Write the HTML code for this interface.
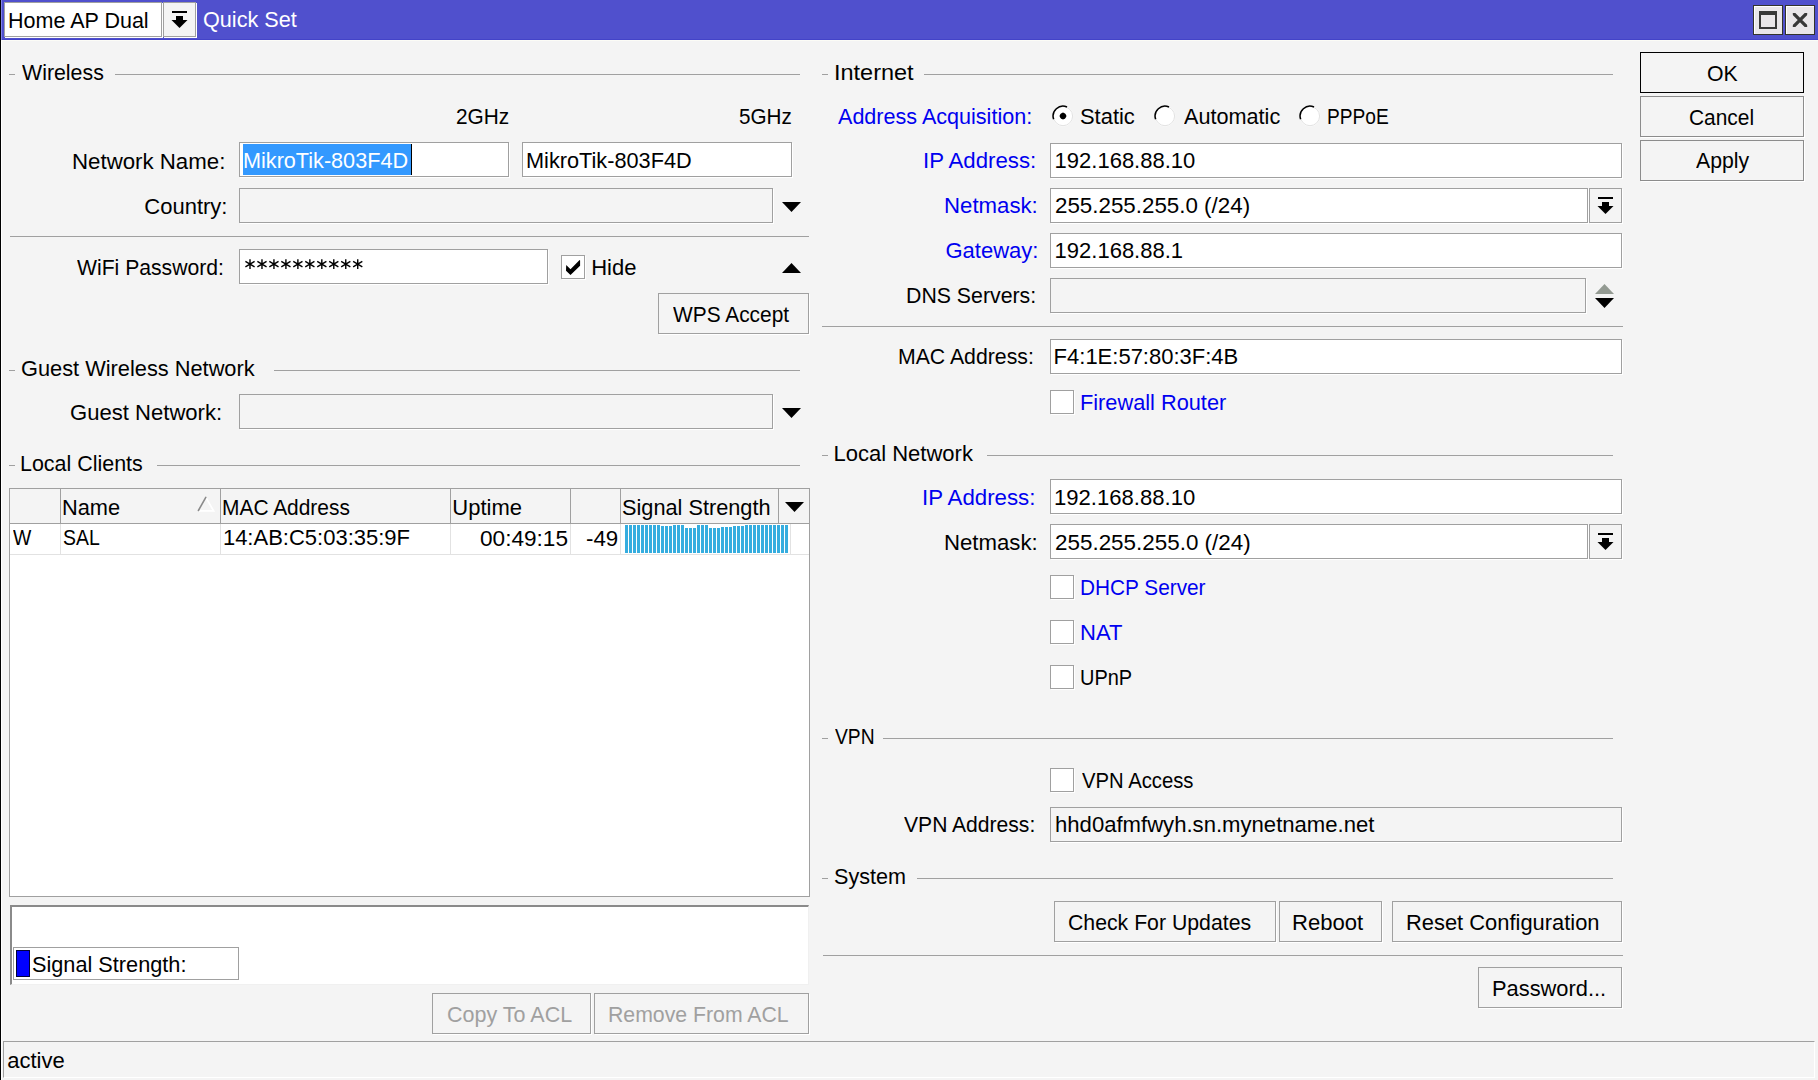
<!DOCTYPE html>
<html><head><meta charset="utf-8"><title>Quick Set</title>
<style>
html,body{margin:0;padding:0}
body{width:1818px;height:1080px;overflow:hidden;position:relative;background:#f4f4f4;font-family:"Liberation Sans",sans-serif}
body>div{position:absolute;box-sizing:border-box}
.t{font-size:22px;line-height:22px;white-space:pre;transform-origin:0 18px}
svg{display:block}
</style></head><body>
<div style="left:0px;top:0px;width:1818px;height:40px;background:#5050cd"></div>
<div style="left:0px;top:39px;width:1818px;height:1px;background:#4343c8"></div>
<div style="left:0px;top:40px;width:1818px;height:1px;background:#fcfcf6"></div>
<div style="left:0px;top:0px;width:1px;height:1080px;background:#000"></div>
<div style="left:1px;top:0px;width:1px;height:40px;background:#8282e6"></div>
<div style="left:1px;top:41px;width:1px;height:1039px;background:#fff"></div>
<div style="left:4px;top:2px;width:158px;height:35px;background:#fff;border:1px solid #a0a0a0;box-shadow:1px 1px 0 #fff;"></div>
<div style="left:163px;top:2px;width:33px;height:35px;background:#f4f4f4;border:1px solid #a0a0a0;box-shadow:1px 1px 0 #fff;"></div>
<svg style="position:absolute;left:163px;top:2px" width="33" height="35" viewBox="0 0 33 35"><rect x="9" y="9" width="15" height="2" fill="#000"/><rect x="13" y="14" width="7" height="5" fill="#000"/><path d="M8.5 18 L24.5 18 L16.5 26 Z" fill="#000"/></svg>
<div style="left:1753px;top:5px;width:30px;height:30px;background:#e9e6e9;border:1px solid #33332b;box-shadow:inset 1px 1px 0 #fff"></div>
<div style="left:1785px;top:5px;width:30px;height:30px;background:#e9e6e9;border:1px solid #33332b;box-shadow:inset 1px 1px 0 #fff"></div>
<svg style="position:absolute;left:1753px;top:5px" width="30" height="30" viewBox="0 0 30 30"><rect x="7" y="7" width="16" height="16" fill="none" stroke="#383838" stroke-width="2"/><rect x="6" y="6" width="18" height="4" fill="#383838"/></svg>
<svg style="position:absolute;left:1785px;top:5px" width="30" height="30" viewBox="0 0 30 30"><defs><clipPath id="cx"><rect x="7.8" y="7.9" width="14.4" height="14.1"/></clipPath></defs><path d="M5 5 L25 25 M25 5 L5 25" stroke="#383838" stroke-width="3.3" clip-path="url(#cx)"/></svg>
<div style="left:9px;top:74px;width:6px;height:1px;background:#a0a0a0"></div>
<div style="left:115px;top:74px;width:685px;height:1px;background:#a0a0a0"></div>
<div style="left:9px;top:370px;width:6px;height:1px;background:#a0a0a0"></div>
<div style="left:274px;top:370px;width:526px;height:1px;background:#a0a0a0"></div>
<div style="left:9px;top:465px;width:6px;height:1px;background:#a0a0a0"></div>
<div style="left:157px;top:465px;width:643px;height:1px;background:#a0a0a0"></div>
<div style="left:822px;top:74px;width:6px;height:1px;background:#a0a0a0"></div>
<div style="left:924px;top:74px;width:689px;height:1px;background:#a0a0a0"></div>
<div style="left:822px;top:455px;width:6px;height:1px;background:#a0a0a0"></div>
<div style="left:987px;top:455px;width:626px;height:1px;background:#a0a0a0"></div>
<div style="left:822px;top:738px;width:6px;height:1px;background:#a0a0a0"></div>
<div style="left:883px;top:738px;width:730px;height:1px;background:#a0a0a0"></div>
<div style="left:822px;top:878px;width:6px;height:1px;background:#a0a0a0"></div>
<div style="left:917px;top:878px;width:696px;height:1px;background:#a0a0a0"></div>
<div style="left:10px;top:236px;width:799px;height:1px;background:#a0a0a0"></div>
<div style="left:822px;top:326px;width:801px;height:1px;background:#a0a0a0"></div>
<div style="left:823px;top:955px;width:800px;height:1px;background:#a0a0a0"></div>
<div style="left:239px;top:142px;width:270px;height:35px;background:#fff;border:1px solid #a0a0a0;box-shadow:1px 1px 0 #fff;"></div>
<div style="left:243px;top:144px;width:168px;height:31px;background:#3399ff"></div>
<div style="left:411px;top:144px;width:1px;height:31px;background:#000"></div>
<div style="left:522px;top:142px;width:270px;height:35px;background:#fff;border:1px solid #a0a0a0;box-shadow:1px 1px 0 #fff;"></div>
<div style="left:239px;top:188px;width:534px;height:35px;background:#f4f4f4;border:1px solid #a0a0a0;box-shadow:1px 1px 0 #fff;"></div>
<svg style="position:absolute;left:782px;top:202px" width="19" height="10" viewBox="0 0 19 10"><path d="M0 0 L19 0 L9.5 10 Z" fill="#000"/></svg>
<div style="left:239px;top:249px;width:309px;height:35px;background:#fff;border:1px solid #a0a0a0;box-shadow:1px 1px 0 #fff;"></div>
<svg style="position:absolute;left:244.9px;top:259px" width="125" height="10.5" viewBox="0 0 125 10.5"><path d="M5.00 0.3 V9.9 M0.40 2.4 L9.60 7.8 M0.40 7.8 L9.60 2.4" stroke="#000" stroke-width="1.4"/><path d="M16.97 0.3 V9.9 M12.37 2.4 L21.57 7.8 M12.37 7.8 L21.57 2.4" stroke="#000" stroke-width="1.4"/><path d="M28.94 0.3 V9.9 M24.34 2.4 L33.54 7.8 M24.34 7.8 L33.54 2.4" stroke="#000" stroke-width="1.4"/><path d="M40.91 0.3 V9.9 M36.31 2.4 L45.51 7.8 M36.31 7.8 L45.51 2.4" stroke="#000" stroke-width="1.4"/><path d="M52.88 0.3 V9.9 M48.28 2.4 L57.48 7.8 M48.28 7.8 L57.48 2.4" stroke="#000" stroke-width="1.4"/><path d="M64.85 0.3 V9.9 M60.25 2.4 L69.45 7.8 M60.25 7.8 L69.45 2.4" stroke="#000" stroke-width="1.4"/><path d="M76.82 0.3 V9.9 M72.22 2.4 L81.42 7.8 M72.22 7.8 L81.42 2.4" stroke="#000" stroke-width="1.4"/><path d="M88.79 0.3 V9.9 M84.19 2.4 L93.39 7.8 M84.19 7.8 L93.39 2.4" stroke="#000" stroke-width="1.4"/><path d="M100.76 0.3 V9.9 M96.16 2.4 L105.36 7.8 M96.16 7.8 L105.36 2.4" stroke="#000" stroke-width="1.4"/><path d="M112.73 0.3 V9.9 M108.13 2.4 L117.33 7.8 M108.13 7.8 L117.33 2.4" stroke="#000" stroke-width="1.4"/></svg>
<div style="left:561px;top:255px;width:24px;height:24px;background:#fff;border:1px solid #a0a0a0;box-shadow:1px 1px 0 #fff;"></div>
<svg style="position:absolute;left:561px;top:255px" width="24" height="24" viewBox="0 0 24 24"><path d="M5.2 9.9 L9.5 14.2 L18.6 4.9 L19.1 5.4 L19.1 10.7 L9.5 20.1 L5 15.7 Z" fill="#000"/></svg>
<svg style="position:absolute;left:782px;top:263px" width="19" height="10" viewBox="0 0 19 10"><path d="M0 10 L19 10 L9.5 0 Z" fill="#000"/></svg>
<div style="left:658px;top:293px;width:151px;height:41px;background:#f4f4f4;border:1px solid #a0a0a0;box-shadow:1px 1px 0 #fff;"></div>
<div style="left:239px;top:394px;width:534px;height:35px;background:#f4f4f4;border:1px solid #a0a0a0;box-shadow:1px 1px 0 #fff;"></div>
<svg style="position:absolute;left:782px;top:408px" width="19" height="10" viewBox="0 0 19 10"><path d="M0 0 L19 0 L9.5 10 Z" fill="#000"/></svg>
<div style="left:9px;top:488px;width:801px;height:409px;background:#fff;border:1px solid #a0a0a0"></div>
<div style="left:10px;top:489px;width:799px;height:34px;background:#f4f4f4"></div>
<div style="left:10px;top:523px;width:799px;height:1px;background:#a0a0a0"></div>
<div style="left:60px;top:489px;width:1px;height:34px;background:#a0a0a0"></div>
<div style="left:220px;top:489px;width:1px;height:34px;background:#a0a0a0"></div>
<div style="left:450px;top:489px;width:1px;height:34px;background:#a0a0a0"></div>
<div style="left:570px;top:489px;width:1px;height:34px;background:#a0a0a0"></div>
<div style="left:620px;top:489px;width:1px;height:34px;background:#a0a0a0"></div>
<div style="left:778px;top:489px;width:1px;height:34px;background:#a0a0a0"></div>
<div style="left:60px;top:524px;width:1px;height:30px;background:#e2e2e2"></div>
<div style="left:220px;top:524px;width:1px;height:30px;background:#e2e2e2"></div>
<div style="left:450px;top:524px;width:1px;height:30px;background:#e2e2e2"></div>
<div style="left:570px;top:524px;width:1px;height:30px;background:#e2e2e2"></div>
<div style="left:620px;top:524px;width:1px;height:30px;background:#e2e2e2"></div>
<div style="left:790px;top:524px;width:1px;height:30px;background:#e2e2e2"></div>
<div style="left:10px;top:554px;width:799px;height:1px;background:#e2e2e2"></div>
<svg style="position:absolute;left:197px;top:496px" width="18" height="17" viewBox="0 0 18 17"><path d="M8.8 1.4 L16.6 14.9 L1.6 14.9" stroke="#fff" stroke-width="1.7" fill="none"/><path d="M1.4 14.5 L8.8 1.4" stroke="#8a8a8a" stroke-width="1.6" fill="none" stroke-linecap="round"/></svg>
<svg style="position:absolute;left:785px;top:502px" width="19" height="10" viewBox="0 0 19 10"><path d="M0 0 L19 0 L9.5 10 Z" fill="#000"/></svg>
<div style="left:625px;top:525px;width:3px;height:28px;background:#35addf"></div>
<div style="left:629px;top:525px;width:3px;height:28px;background:#35addf"></div>
<div style="left:633px;top:525px;width:3px;height:28px;background:#35addf"></div>
<div style="left:637px;top:525px;width:3px;height:28px;background:#35addf"></div>
<div style="left:641px;top:525px;width:3px;height:28px;background:#35addf"></div>
<div style="left:645px;top:525px;width:3px;height:28px;background:#35addf"></div>
<div style="left:649px;top:525px;width:3px;height:28px;background:#35addf"></div>
<div style="left:653px;top:525px;width:3px;height:28px;background:#35addf"></div>
<div style="left:657px;top:525px;width:3px;height:28px;background:#35addf"></div>
<div style="left:661px;top:526px;width:3px;height:27px;background:#35addf"></div>
<div style="left:665px;top:526px;width:3px;height:27px;background:#35addf"></div>
<div style="left:669px;top:526px;width:3px;height:27px;background:#35addf"></div>
<div style="left:673px;top:525px;width:3px;height:28px;background:#35addf"></div>
<div style="left:677px;top:525px;width:3px;height:28px;background:#35addf"></div>
<div style="left:681px;top:525px;width:3px;height:28px;background:#35addf"></div>
<div style="left:685px;top:528px;width:3px;height:25px;background:#35addf"></div>
<div style="left:689px;top:528px;width:3px;height:25px;background:#35addf"></div>
<div style="left:693px;top:528px;width:3px;height:25px;background:#35addf"></div>
<div style="left:697px;top:525px;width:3px;height:28px;background:#35addf"></div>
<div style="left:701px;top:525px;width:3px;height:28px;background:#35addf"></div>
<div style="left:705px;top:525px;width:3px;height:28px;background:#35addf"></div>
<div style="left:709px;top:528px;width:3px;height:25px;background:#35addf"></div>
<div style="left:713px;top:528px;width:3px;height:25px;background:#35addf"></div>
<div style="left:717px;top:528px;width:3px;height:25px;background:#35addf"></div>
<div style="left:721px;top:527px;width:3px;height:26px;background:#35addf"></div>
<div style="left:725px;top:527px;width:3px;height:26px;background:#35addf"></div>
<div style="left:729px;top:527px;width:3px;height:26px;background:#35addf"></div>
<div style="left:733px;top:526px;width:3px;height:27px;background:#35addf"></div>
<div style="left:737px;top:526px;width:3px;height:27px;background:#35addf"></div>
<div style="left:741px;top:526px;width:3px;height:27px;background:#35addf"></div>
<div style="left:745px;top:525px;width:3px;height:28px;background:#35addf"></div>
<div style="left:749px;top:525px;width:3px;height:28px;background:#35addf"></div>
<div style="left:753px;top:525px;width:3px;height:28px;background:#35addf"></div>
<div style="left:757px;top:525px;width:3px;height:28px;background:#35addf"></div>
<div style="left:761px;top:525px;width:3px;height:28px;background:#35addf"></div>
<div style="left:765px;top:525px;width:3px;height:28px;background:#35addf"></div>
<div style="left:769px;top:525px;width:3px;height:28px;background:#35addf"></div>
<div style="left:773px;top:525px;width:3px;height:28px;background:#35addf"></div>
<div style="left:777px;top:525px;width:3px;height:28px;background:#35addf"></div>
<div style="left:781px;top:525px;width:3px;height:28px;background:#35addf"></div>
<div style="left:785px;top:525px;width:3px;height:28px;background:#35addf"></div>
<div style="left:10px;top:905px;width:799px;height:80px;background:#fff;border-top:2px solid #8a8a8a;border-left:2px solid #8a8a8a;border-right:1px solid #f0f0f0;border-bottom:1px solid #f0f0f0"></div>
<div style="left:13px;top:947px;width:226px;height:33px;background:#fff;border:1px solid #a0a0a0"></div>
<div style="left:16px;top:950px;width:14px;height:27px;background:#0000ff;border:1px solid #00003a"></div>
<div style="left:432px;top:993px;width:159px;height:41px;background:#f4f4f4;border:1px solid #a0a0a0;box-shadow:1px 1px 0 #fff;"></div>
<div style="left:594px;top:993px;width:215px;height:41px;background:#f4f4f4;border:1px solid #a0a0a0;box-shadow:1px 1px 0 #fff;"></div>
<div style="left:3px;top:1041px;width:1812px;height:37px;border-top:1px solid #a0a0a0;border-left:1px solid #a0a0a0;border-right:1px solid #fff;border-bottom:1px solid #fff"></div>
<svg style="position:absolute;left:1050.75px;top:104px" width="24" height="24" viewBox="0 0 24 24"><circle cx="12" cy="12.1" r="10.3" fill="#fff"/><circle cx="12" cy="12.1" r="9.6" fill="#fff" stroke="#e2e2e2" stroke-width="1"/><path d="M2.64 15.3 A9.9 9.9 0 0 1 16.03 3.06" stroke="#000" stroke-width="1.5" fill="none"/></svg>
<svg style="position:absolute;left:1153.2px;top:104px" width="24" height="24" viewBox="0 0 24 24"><circle cx="12" cy="12.1" r="10.3" fill="#fff"/><circle cx="12" cy="12.1" r="9.6" fill="#fff" stroke="#e2e2e2" stroke-width="1"/><path d="M2.64 15.3 A9.9 9.9 0 0 1 16.03 3.06" stroke="#000" stroke-width="1.5" fill="none"/></svg>
<svg style="position:absolute;left:1298.2px;top:104px" width="24" height="24" viewBox="0 0 24 24"><circle cx="12" cy="12.1" r="10.3" fill="#fff"/><circle cx="12" cy="12.1" r="9.6" fill="#fff" stroke="#e2e2e2" stroke-width="1"/><path d="M2.64 15.3 A9.9 9.9 0 0 1 16.03 3.06" stroke="#000" stroke-width="1.5" fill="none"/></svg>
<svg style="position:absolute;left:1057.75px;top:111.1px" width="10" height="10" viewBox="0 0 10 10"><path d="M5 1.3 L8.7 5 L5 8.7 L1.3 5 Z" fill="#000"/><circle cx="5" cy="5" r="3.1" fill="#000"/></svg>
<div style="left:1050px;top:143px;width:572px;height:35px;background:#fff;border:1px solid #a0a0a0;box-shadow:1px 1px 0 #fff;"></div>
<div style="left:1050px;top:188px;width:538px;height:35px;background:#fff;border:1px solid #a0a0a0;box-shadow:1px 1px 0 #fff;"></div>
<div style="left:1589px;top:188px;width:33px;height:35px;background:#f4f4f4;border:1px solid #a0a0a0;box-shadow:1px 1px 0 #fff;"></div>
<div style="left:1050px;top:233px;width:572px;height:35px;background:#fff;border:1px solid #a0a0a0;box-shadow:1px 1px 0 #fff;"></div>
<div style="left:1050px;top:278px;width:536px;height:35px;background:#f4f4f4;border:1px solid #a0a0a0;box-shadow:1px 1px 0 #fff;"></div>
<svg style="position:absolute;left:1595px;top:284px" width="19" height="10" viewBox="0 0 19 10"><path d="M0 10 L19 10 L9.5 0 Z" fill="#939a92"/></svg>
<svg style="position:absolute;left:1595px;top:298px" width="19" height="10" viewBox="0 0 19 10"><path d="M0 0 L19 0 L9.5 10 Z" fill="#000"/></svg>
<div style="left:1050px;top:339px;width:572px;height:35px;background:#fff;border:1px solid #a0a0a0;box-shadow:1px 1px 0 #fff;"></div>
<div style="left:1050px;top:390px;width:24px;height:24px;background:#fff;border:1px solid #a0a0a0;box-shadow:1px 1px 0 #fff;"></div>
<div style="left:1050px;top:479px;width:572px;height:35px;background:#fff;border:1px solid #a0a0a0;box-shadow:1px 1px 0 #fff;"></div>
<div style="left:1050px;top:524px;width:538px;height:35px;background:#fff;border:1px solid #a0a0a0;box-shadow:1px 1px 0 #fff;"></div>
<div style="left:1589px;top:524px;width:33px;height:35px;background:#f4f4f4;border:1px solid #a0a0a0;box-shadow:1px 1px 0 #fff;"></div>
<div style="left:1050px;top:575px;width:24px;height:24px;background:#fff;border:1px solid #a0a0a0;box-shadow:1px 1px 0 #fff;"></div>
<div style="left:1050px;top:620px;width:24px;height:24px;background:#fff;border:1px solid #a0a0a0;box-shadow:1px 1px 0 #fff;"></div>
<div style="left:1050px;top:665px;width:24px;height:24px;background:#fff;border:1px solid #a0a0a0;box-shadow:1px 1px 0 #fff;"></div>
<div style="left:1050px;top:768px;width:24px;height:24px;background:#fff;border:1px solid #a0a0a0;box-shadow:1px 1px 0 #fff;"></div>
<div style="left:1050px;top:807px;width:572px;height:35px;background:#f4f4f4;border:1px solid #a0a0a0;box-shadow:1px 1px 0 #fff;"></div>
<svg style="position:absolute;left:1589px;top:188px" width="33" height="35" viewBox="0 0 33 35"><rect x="9" y="9" width="15" height="2" fill="#000"/><rect x="13" y="14" width="7" height="5" fill="#000"/><path d="M8.5 18 L24.5 18 L16.5 26 Z" fill="#000"/></svg>
<svg style="position:absolute;left:1589px;top:524px" width="33" height="35" viewBox="0 0 33 35"><rect x="9" y="9" width="15" height="2" fill="#000"/><rect x="13" y="14" width="7" height="5" fill="#000"/><path d="M8.5 18 L24.5 18 L16.5 26 Z" fill="#000"/></svg>
<div style="left:1640px;top:52px;width:164px;height:41px;background:#f4f4f4;border:1px solid #000"></div>
<div style="left:1640px;top:96px;width:164px;height:41px;background:#f4f4f4;border:1px solid #8c8c8c;box-shadow:1px 1px 0 #fff;"></div>
<div style="left:1640px;top:140px;width:164px;height:41px;background:#f4f4f4;border:1px solid #8c8c8c;box-shadow:1px 1px 0 #fff;"></div>
<div style="left:1054px;top:901px;width:222px;height:41px;background:#f4f4f4;border:1px solid #a0a0a0;box-shadow:1px 1px 0 #fff;"></div>
<div style="left:1279px;top:901px;width:103px;height:41px;background:#f4f4f4;border:1px solid #a0a0a0;box-shadow:1px 1px 0 #fff;"></div>
<div style="left:1392px;top:901px;width:230px;height:41px;background:#f4f4f4;border:1px solid #a0a0a0;box-shadow:1px 1px 0 #fff;"></div>
<div style="left:1478px;top:967px;width:144px;height:41px;background:#f4f4f4;border:1px solid #a0a0a0;box-shadow:1px 1px 0 #fff;"></div>
<div class="t" style="left:8.05px;top:10.0px;color:#000;transform:scaleX(0.9773);">Home AP Dual</div>
<div class="t" style="left:202.62px;top:9.0px;color:#fff;transform:scaleX(0.9830);">Quick Set</div>
<div class="t" style="left:22.20px;top:62.0px;color:#000;transform:scaleX(0.9702);">Wireless</div>
<div class="t" style="left:455.95px;top:106.0px;color:#000;transform:scaleX(0.9463);">2GHz</div>
<div class="t" style="left:738.86px;top:106.0px;color:#000;transform:scaleX(0.9389);">5GHz</div>
<div class="t" style="left:71.58px;top:151.0px;color:#000;transform:scaleX(1.0115);">Network Name:</div>
<div class="t" style="left:243.23px;top:150.0px;color:#fff;transform:scaleX(0.9830);">MikroTik-803F4D</div>
<div class="t" style="left:525.93px;top:150.0px;color:#000;transform:scaleX(0.9867);">MikroTik-803F4D</div>
<div class="t" style="left:144.30px;top:196.0px;color:#000;">Country:</div>
<div class="t" style="left:77.30px;top:257.0px;color:#000;transform:scaleX(0.9616);">WiFi Password:</div>
<div class="t" style="left:591.20px;top:257.0px;color:#000;">Hide</div>
<div class="t" style="left:673.20px;top:304.0px;color:#000;transform:scaleX(0.9492);">WPS Accept</div>
<div class="t" style="left:21.31px;top:358.0px;color:#000;transform:scaleX(0.9902);">Guest Wireless Network</div>
<div class="t" style="left:70.30px;top:402.0px;color:#000;transform:scaleX(1.0034);">Guest Network:</div>
<div class="t" style="left:20.35px;top:453.0px;color:#000;transform:scaleX(0.9748);">Local Clients</div>
<div class="t" style="left:62.02px;top:497.0px;color:#000;transform:scaleX(0.9911);">Name</div>
<div class="t" style="left:222.20px;top:497.0px;color:#000;transform:scaleX(0.9508);">MAC Address</div>
<div class="t" style="left:452.30px;top:497.0px;color:#000;">Uptime</div>
<div class="t" style="left:622.31px;top:497.0px;color:#000;transform:scaleX(0.9872);">Signal Strength</div>
<div class="t" style="left:12.50px;top:527.0px;color:#000;transform:scaleX(0.8810);">W</div>
<div class="t" style="left:62.52px;top:527.0px;color:#000;transform:scaleX(0.8825);">SAL</div>
<div class="t" style="left:222.90px;top:527.0px;color:#000;">14:AB:C5:03:35:9F</div>
<div class="t" style="left:479.67px;top:528.0px;color:#000;transform:scaleX(1.0274);">00:49:15</div>
<div class="t" style="left:585.89px;top:528.0px;color:#000;transform:scaleX(1.0133);">-49</div>
<div class="t" style="left:31.61px;top:954.0px;color:#000;transform:scaleX(0.9864);">Signal Strength:</div>
<div class="t" style="left:446.52px;top:1004.0px;color:#a0a0a0;transform:scaleX(0.9778);">Copy To ACL</div>
<div class="t" style="left:607.77px;top:1004.0px;color:#a0a0a0;transform:scaleX(0.9658);">Remove From ACL</div>
<div class="t" style="left:7.25px;top:1050.0px;color:#000;">active</div>
<div class="t" style="left:833.67px;top:62.0px;color:#000;transform:scaleX(1.0671);">Internet</div>
<div class="t" style="left:837.50px;top:106.0px;color:#0000F0;transform:scaleX(0.9801);">Address Acquisition:</div>
<div class="t" style="left:1080.20px;top:106.0px;color:#000;transform:scaleX(0.9962);">Static</div>
<div class="t" style="left:1183.60px;top:106.0px;color:#000;transform:scaleX(0.9835);">Automatic</div>
<div class="t" style="left:1326.96px;top:106.0px;color:#000;transform:scaleX(0.8706);">PPPoE</div>
<div class="t" style="left:922.88px;top:150.0px;color:#0000F0;transform:scaleX(1.0102);">IP Address:</div>
<div class="t" style="left:1054.60px;top:150.0px;color:#000;">192.168.88.10</div>
<div class="t" style="left:943.98px;top:195.0px;color:#0000F0;transform:scaleX(1.0090);">Netmask:</div>
<div class="t" style="left:1054.98px;top:195.0px;color:#000;transform:scaleX(1.0158);">255.255.255.0 (/24)</div>
<div class="t" style="left:945.50px;top:240.0px;color:#0000F0;">Gateway:</div>
<div class="t" style="left:1054.60px;top:240.0px;color:#000;">192.168.88.1</div>
<div class="t" style="left:905.86px;top:285.0px;color:#000;transform:scaleX(0.9679);">DNS Servers:</div>
<div class="t" style="left:898.37px;top:346.0px;color:#000;transform:scaleX(0.9657);">MAC Address:</div>
<div class="t" style="left:1053.60px;top:346.0px;color:#000;">F4:1E:57:80:3F:4B</div>
<div class="t" style="left:1079.72px;top:392.0px;color:#0000F0;transform:scaleX(0.9884);">Firewall Router</div>
<div class="t" style="left:833.50px;top:443.0px;color:#000;">Local Network</div>
<div class="t" style="left:922.48px;top:487.0px;color:#0000F0;transform:scaleX(1.0116);">IP Address:</div>
<div class="t" style="left:1054.49px;top:487.0px;color:#000;transform:scaleX(1.0036);">192.168.88.10</div>
<div class="t" style="left:943.73px;top:532.0px;color:#000;transform:scaleX(1.0084);">Netmask:</div>
<div class="t" style="left:1054.88px;top:532.0px;color:#000;transform:scaleX(1.0189);">255.255.255.0 (/24)</div>
<div class="t" style="left:1080.11px;top:577.0px;color:#0000F0;transform:scaleX(0.9450);">DHCP Server</div>
<div class="t" style="left:1080.00px;top:622.0px;color:#0000F0;">NAT</div>
<div class="t" style="left:1080.19px;top:667.0px;color:#000;transform:scaleX(0.9074);">UPnP</div>
<div class="t" style="left:835.40px;top:726.0px;color:#000;transform:scaleX(0.8750);">VPN</div>
<div class="t" style="left:1081.50px;top:770.0px;color:#000;transform:scaleX(0.9208);">VPN Access</div>
<div class="t" style="left:904.30px;top:814.0px;color:#000;transform:scaleX(0.9585);">VPN Address:</div>
<div class="t" style="left:1054.50px;top:814.0px;color:#000;transform:scaleX(1.0047);">hhd0afmfwyh.sn.mynetname.net</div>
<div class="t" style="left:834.02px;top:866.0px;color:#000;transform:scaleX(0.9817);">System</div>
<div class="t" style="left:1068.33px;top:912.0px;color:#000;transform:scaleX(0.9660);">Check For Updates</div>
<div class="t" style="left:1292.49px;top:912.0px;color:#000;transform:scaleX(1.0043);">Reboot</div>
<div class="t" style="left:1405.51px;top:912.0px;color:#000;transform:scaleX(0.9953);">Reset Configuration</div>
<div class="t" style="left:1491.71px;top:978.0px;color:#000;transform:scaleX(0.9928);">Password...</div>
<div class="t" style="left:1707.03px;top:63.0px;color:#000;transform:scaleX(0.9667);">OK</div>
<div class="t" style="left:1688.55px;top:107.0px;color:#000;transform:scaleX(0.9500);">Cancel</div>
<div class="t" style="left:1695.80px;top:150.0px;color:#000;transform:scaleX(0.9636);">Apply</div>
</body></html>
